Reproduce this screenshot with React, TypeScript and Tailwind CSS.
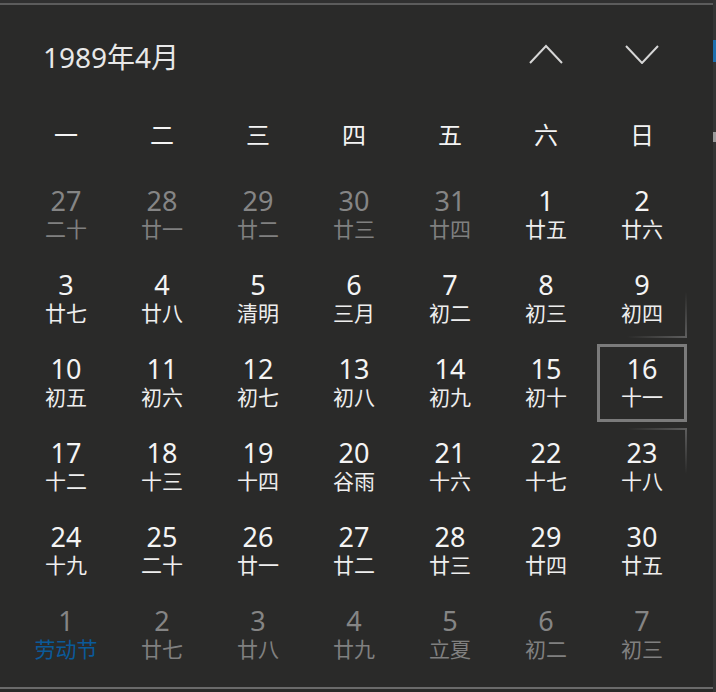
import React from "react";

type Day = { n: number; sub: string; dim?: boolean; blue?: boolean };

const WEEK = ["一", "二", "三", "四", "五", "六", "日"];

const d = (n: number, sub: string, dim = false, blue = false): Day => ({ n, sub, dim, blue });

const ROWS: Day[][] = [
  [d(27, "二十", true), d(28, "廿一", true), d(29, "廿二", true), d(30, "廿三", true), d(31, "廿四", true), d(1, "廿五"), d(2, "廿六")],
  [d(3, "廿七"), d(4, "廿八"), d(5, "清明"), d(6, "三月"), d(7, "初二"), d(8, "初三"), d(9, "初四")],
  [d(10, "初五"), d(11, "初六"), d(12, "初七"), d(13, "初八"), d(14, "初九"), d(15, "初十"), d(16, "十一")],
  [d(17, "十二"), d(18, "十三"), d(19, "十四"), d(20, "谷雨"), d(21, "十六"), d(22, "十七"), d(23, "十八")],
  [d(24, "十九"), d(25, "二十"), d(26, "廿一"), d(27, "廿二"), d(28, "廿三"), d(29, "廿四"), d(30, "廿五")],
  [d(1, "劳动节", true, true), d(2, "廿七", true), d(3, "廿八", true), d(4, "廿九", true), d(5, "立夏", true), d(6, "初二", true), d(7, "初三", true)],
];

const FONT = { fontFamily: '"Noto Sans", "Noto Sans CJK SC", sans-serif' };

// Chevron buttons
const Chevron = ({ up }: { up?: boolean }) => (
  <button className="flex h-[40px] w-[96px] items-center justify-center">
    <svg width="34" height="20" viewBox="0 0 34 20" fill="none" stroke="#d6d6d6" strokeWidth="2">
      {up ? <polyline points="1,19 17,2 33,19" /> : <polyline points="1,2 17,19 33,2" />}
    </svg>
  </button>
);

const Cell = ({ day, selected, reveal }: { day: Day; selected?: boolean; reveal?: "top" | "bottom" }) => {
  const numColor = day.dim ? "text-[#858585]" : "text-[#f4f4f4]";
  const subColor = day.blue ? "text-[#0b5a9a]" : day.dim ? "text-[#808080]" : "text-[#eeeeee]";
  return (
    <div className="relative flex h-[84px] w-[96px] flex-col items-center pt-[13px]">
      {selected && <div className="absolute inset-[3px] border-[3px] border-[#7b7b7b]" />}
      {reveal === "bottom" && (
        <>
          <div className="absolute right-[3px] bottom-[3px] h-[46px] w-[2px] bg-linear-to-b from-transparent to-[#5e5e5e]" />
          <div className="absolute right-[3px] bottom-[3px] h-[2px] w-[60px] bg-linear-to-r from-transparent to-[#5e5e5e]" />
        </>
      )}
      {reveal === "top" && (
        <>
          <div className="absolute top-[3px] right-[3px] h-[46px] w-[2px] bg-linear-to-t from-transparent to-[#5e5e5e]" />
          <div className="absolute top-[3px] right-[3px] h-[2px] w-[60px] bg-linear-to-r from-transparent to-[#5e5e5e]" />
        </>
      )}
      <span className={`text-[27px] leading-[30px] ${numColor}`}>{day.n}</span>
      <span className={`text-[21px] leading-[26px] ${subColor}`}>{day.sub}</span>
    </div>
  );
};

export default function App() {
  return (
    <div className="flex h-[692px] w-[716px] bg-[#2a2a29]" style={FONT}>
      <div className="flex w-[713px] flex-col">
        <div className="h-[3px] bg-[#303030]" />
        <div className="h-[2px] bg-[#5c5c5c]" />

        {/* Header */}
        <div className="flex h-[100px] items-center pr-[23px] pb-[2px] pl-[43px]">
          <p className="flex-1 pt-[6px] text-[28px] text-[#e8e8e8]">1989年4月</p>
          <Chevron up />
          <Chevron />
        </div>

        {/* Weekdays */}
        <div className="flex h-[68px] items-center px-[18px] pb-2">
          {WEEK.map((w) => (
            <div key={w} className="w-[96px] text-center text-[24px] text-[#f4f4f4]">
              {w}
            </div>
          ))}
        </div>

        {/* Days */}
        <div className="flex flex-col px-[18px]">
          {ROWS.map((row, ri) => (
            <div key={ri} className="flex">
              {row.map((day, ci) => (
                <Cell
                  key={ci}
                  day={day}
                  selected={ri === 2 && ci === 6}
                  reveal={ri === 1 && ci === 6 ? "bottom" : ri === 3 && ci === 6 ? "top" : undefined}
                />
              ))}
            </div>
          ))}
        </div>

        <div className="mt-[10px] h-[2px] bg-[#6a6a6a]" />
      </div>

      {/* clipped neighbour edge */}
      <div className="flex w-[3px] flex-col bg-[#343434]">
        <div className="h-[40px]" />
        <div className="h-[22px] bg-[#1d6fae]" />
        <div className="h-[70px]" />
        <div className="h-[10px] bg-[#9a9a9a]" />
      </div>
    </div>
  );
}
